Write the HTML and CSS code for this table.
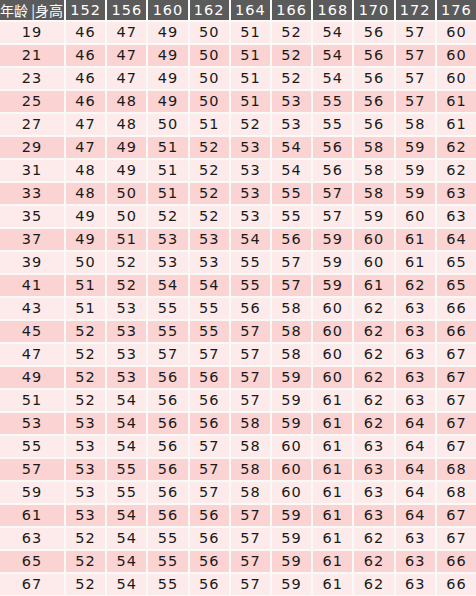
FILE: index.html
```html
<!DOCTYPE html>
<html lang="zh">
<head>
<meta charset="utf-8">
<title>年龄身高体重表</title>
<link rel="stylesheet" href="styles.css">
</head>
<body>
<div class="chart">
  <div class="row head"><div class="c first">年龄 |身高</div><div class="c">152</div><div class="c">156</div><div class="c">160</div><div class="c">162</div><div class="c">164</div><div class="c">166</div><div class="c">168</div><div class="c">170</div><div class="c">172</div><div class="c">176</div></div>
  <div class="row odd"><div class="c">19</div><div class="c">46</div><div class="c">47</div><div class="c">49</div><div class="c">50</div><div class="c">51</div><div class="c">52</div><div class="c">54</div><div class="c">56</div><div class="c">57</div><div class="c">60</div></div>
  <div class="row even"><div class="c">21</div><div class="c">46</div><div class="c">47</div><div class="c">49</div><div class="c">50</div><div class="c">51</div><div class="c">52</div><div class="c">54</div><div class="c">56</div><div class="c">57</div><div class="c">60</div></div>
  <div class="row odd"><div class="c">23</div><div class="c">46</div><div class="c">47</div><div class="c">49</div><div class="c">50</div><div class="c">51</div><div class="c">52</div><div class="c">54</div><div class="c">56</div><div class="c">57</div><div class="c">60</div></div>
  <div class="row even"><div class="c">25</div><div class="c">46</div><div class="c">48</div><div class="c">49</div><div class="c">50</div><div class="c">51</div><div class="c">53</div><div class="c">55</div><div class="c">56</div><div class="c">57</div><div class="c">61</div></div>
  <div class="row odd"><div class="c">27</div><div class="c">47</div><div class="c">48</div><div class="c">50</div><div class="c">51</div><div class="c">52</div><div class="c">53</div><div class="c">55</div><div class="c">56</div><div class="c">58</div><div class="c">61</div></div>
  <div class="row even"><div class="c">29</div><div class="c">47</div><div class="c">49</div><div class="c">51</div><div class="c">52</div><div class="c">53</div><div class="c">54</div><div class="c">56</div><div class="c">58</div><div class="c">59</div><div class="c">62</div></div>
  <div class="row odd"><div class="c">31</div><div class="c">48</div><div class="c">49</div><div class="c">51</div><div class="c">52</div><div class="c">53</div><div class="c">54</div><div class="c">56</div><div class="c">58</div><div class="c">59</div><div class="c">62</div></div>
  <div class="row even"><div class="c">33</div><div class="c">48</div><div class="c">50</div><div class="c">51</div><div class="c">52</div><div class="c">53</div><div class="c">55</div><div class="c">57</div><div class="c">58</div><div class="c">59</div><div class="c">63</div></div>
  <div class="row odd"><div class="c">35</div><div class="c">49</div><div class="c">50</div><div class="c">52</div><div class="c">52</div><div class="c">53</div><div class="c">55</div><div class="c">57</div><div class="c">59</div><div class="c">60</div><div class="c">63</div></div>
  <div class="row even"><div class="c">37</div><div class="c">49</div><div class="c">51</div><div class="c">53</div><div class="c">53</div><div class="c">54</div><div class="c">56</div><div class="c">59</div><div class="c">60</div><div class="c">61</div><div class="c">64</div></div>
  <div class="row odd"><div class="c">39</div><div class="c">50</div><div class="c">52</div><div class="c">53</div><div class="c">53</div><div class="c">55</div><div class="c">57</div><div class="c">59</div><div class="c">60</div><div class="c">61</div><div class="c">65</div></div>
  <div class="row even"><div class="c">41</div><div class="c">51</div><div class="c">52</div><div class="c">54</div><div class="c">54</div><div class="c">55</div><div class="c">57</div><div class="c">59</div><div class="c">61</div><div class="c">62</div><div class="c">65</div></div>
  <div class="row odd"><div class="c">43</div><div class="c">51</div><div class="c">53</div><div class="c">55</div><div class="c">55</div><div class="c">56</div><div class="c">58</div><div class="c">60</div><div class="c">62</div><div class="c">63</div><div class="c">66</div></div>
  <div class="row even"><div class="c">45</div><div class="c">52</div><div class="c">53</div><div class="c">55</div><div class="c">55</div><div class="c">57</div><div class="c">58</div><div class="c">60</div><div class="c">62</div><div class="c">63</div><div class="c">66</div></div>
  <div class="row odd"><div class="c">47</div><div class="c">52</div><div class="c">53</div><div class="c">57</div><div class="c">57</div><div class="c">57</div><div class="c">58</div><div class="c">60</div><div class="c">62</div><div class="c">63</div><div class="c">67</div></div>
  <div class="row even"><div class="c">49</div><div class="c">52</div><div class="c">53</div><div class="c">56</div><div class="c">56</div><div class="c">57</div><div class="c">59</div><div class="c">60</div><div class="c">62</div><div class="c">63</div><div class="c">67</div></div>
  <div class="row odd"><div class="c">51</div><div class="c">52</div><div class="c">54</div><div class="c">56</div><div class="c">56</div><div class="c">57</div><div class="c">59</div><div class="c">61</div><div class="c">62</div><div class="c">63</div><div class="c">67</div></div>
  <div class="row even"><div class="c">53</div><div class="c">53</div><div class="c">54</div><div class="c">56</div><div class="c">56</div><div class="c">58</div><div class="c">59</div><div class="c">61</div><div class="c">62</div><div class="c">64</div><div class="c">67</div></div>
  <div class="row odd"><div class="c">55</div><div class="c">53</div><div class="c">54</div><div class="c">56</div><div class="c">57</div><div class="c">58</div><div class="c">60</div><div class="c">61</div><div class="c">63</div><div class="c">64</div><div class="c">67</div></div>
  <div class="row even"><div class="c">57</div><div class="c">53</div><div class="c">55</div><div class="c">56</div><div class="c">57</div><div class="c">58</div><div class="c">60</div><div class="c">61</div><div class="c">63</div><div class="c">64</div><div class="c">68</div></div>
  <div class="row odd"><div class="c">59</div><div class="c">53</div><div class="c">55</div><div class="c">56</div><div class="c">57</div><div class="c">58</div><div class="c">60</div><div class="c">61</div><div class="c">63</div><div class="c">64</div><div class="c">68</div></div>
  <div class="row even"><div class="c">61</div><div class="c">53</div><div class="c">54</div><div class="c">56</div><div class="c">56</div><div class="c">57</div><div class="c">59</div><div class="c">61</div><div class="c">63</div><div class="c">64</div><div class="c">67</div></div>
  <div class="row odd"><div class="c">63</div><div class="c">52</div><div class="c">54</div><div class="c">55</div><div class="c">56</div><div class="c">57</div><div class="c">59</div><div class="c">61</div><div class="c">62</div><div class="c">63</div><div class="c">67</div></div>
  <div class="row even"><div class="c">65</div><div class="c">52</div><div class="c">54</div><div class="c">55</div><div class="c">56</div><div class="c">57</div><div class="c">59</div><div class="c">61</div><div class="c">62</div><div class="c">63</div><div class="c">66</div></div>
  <div class="row odd"><div class="c">67</div><div class="c">52</div><div class="c">54</div><div class="c">55</div><div class="c">56</div><div class="c">57</div><div class="c">59</div><div class="c">61</div><div class="c">62</div><div class="c">63</div><div class="c">66</div></div>
</div>
</body>
</html>
```
FILE: styles.css
```css
html, body {
  margin: 0;
  padding: 0;
  background: #f8faf8;
}
.chart {
  width: 476px;
  display: flex;
  flex-direction: column;
  gap: 2px;
  font-family: "DejaVu Sans", Verdana, sans-serif;
  font-size: 14.5px;
  color: #1a1a1a;
}
.row {
  display: grid;
  grid-template-columns: 64px repeat(10, 1fr);
  column-gap: 2px;
  height: 21px;
}
.c {
  text-align: center;
  line-height: 21px;
  letter-spacing: 1px;
  white-space: nowrap;
  overflow: hidden;
}
.head {
  height: 20px;
}
.head .c {
  background: #5b5b5b;
  color: #ffffff;
  line-height: 20px;
}
.head .first {
  font-family: "Noto Sans CJK SC", "DejaVu Sans", sans-serif;
  font-size: 14px;
  letter-spacing: 0;
  text-align: left;
}
.odd .c {
  background: #fdebeb;
}
.even .c {
  background: #fbd3d3;
}
```
